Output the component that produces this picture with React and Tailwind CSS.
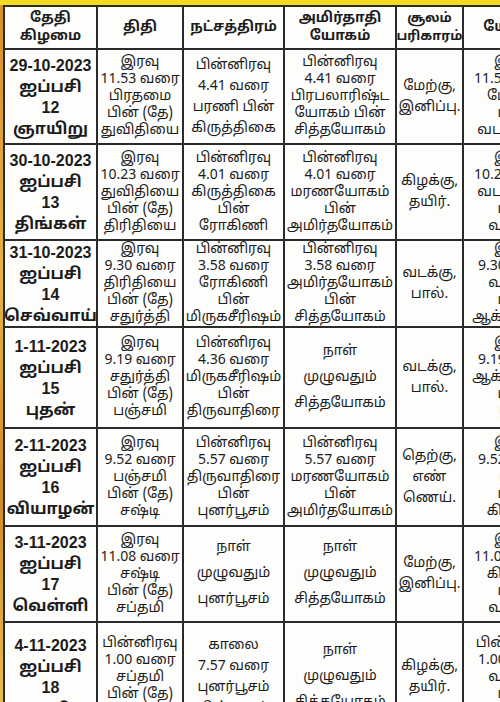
import React from "react";

const rows = [
  {
    h: 95,
    date: ["29-10-2023", "ஐப்பசி", "12", "ஞாயிறு"],
    tithi: ["இரவு", "11.53 வரை", "பிரதமை", "பின் (தே)", "துவிதியை"],
    nak: ["பின்னிரவு", "4.41 வரை", "பரணி பின்", "கிருத்திகை"],
    amr: ["பின்னிரவு", "4.41 வரை", "பிரபலாரிஷ்ட", "யோகம் பின்", "சித்தயோகம்"],
    sool: ["மேற்கு,", "இனிப்பு."],
    last: ["இரவு", "11.53 வரை", "மேஷம்", "பின்", "வடமேற்கு"],
  },
  {
    h: 96,
    date: ["30-10-2023", "ஐப்பசி", "13", "திங்கள்"],
    tithi: ["இரவு", "10.23 வரை", "துவிதியை", "பின் (தே)", "திரிதியை"],
    nak: ["பின்னிரவு", "4.01 வரை", "கிருத்திகை", "பின்", "ரோகிணி"],
    amr: ["பின்னிரவு", "4.01 வரை", "மரணயோகம்", "பின்", "அமிர்தயோகம்"],
    sool: ["கிழக்கு,", "தயிர்."],
    last: ["இரவு", "10.23 வரை", "வடமேற்கு", "பின்", "வடக்கு"],
  },
  {
    h: 85,
    date: ["31-10-2023", "ஐப்பசி", "14", "செவ்வாய்"],
    tithi: ["இரவு", "9.30 வரை", "திரிதியை", "பின் (தே)", "சதுர்த்தி"],
    nak: ["பின்னிரவு", "3.58 வரை", "ரோகிணி", "பின்", "மிருகசீரிஷம்"],
    amr: ["பின்னிரவு", "3.58 வரை", "அமிர்தயோகம்", "பின்", "சித்தயோகம்"],
    sool: ["வடக்கு,", "பால்."],
    last: ["இரவு", "9.30 வரை", "வடக்கு", "பின்", "ஆக்னேயம்"],
  },
  {
    h: 101,
    date: ["1-11-2023", "ஐப்பசி", "15", "புதன்"],
    tithi: ["இரவு", "9.19 வரை", "சதுர்த்தி", "பின் (தே)", "பஞ்சமி"],
    nak: ["பின்னிரவு", "4.36 வரை", "மிருகசீரிஷம்", "பின்", "திருவாதிரை"],
    amr: ["நாள்", "முழுவதும்", "சித்தயோகம்"],
    sool: ["வடக்கு,", "பால்."],
    last: ["இரவு", "9.19 வரை", "ஆக்னேயம்", "பின்", "பூமி"],
  },
  {
    h: 98,
    date: ["2-11-2023", "ஐப்பசி", "16", "வியாழன்"],
    tithi: ["இரவு", "9.52 வரை", "பஞ்சமி", "பின் (தே)", "சஷ்டி"],
    nak: ["பின்னிரவு", "5.57 வரை", "திருவாதிரை", "பின்", "புனர்பூசம்"],
    amr: ["பின்னிரவு", "5.57 வரை", "மரணயோகம்", "பின்", "அமிர்தயோகம்"],
    sool: ["தெற்கு,", "எண்", "ணெய்."],
    last: ["இரவு", "9.52 வரை", "பூமி", "பின்", "கிழக்கு"],
  },
  {
    h: 96,
    date: ["3-11-2023", "ஐப்பசி", "17", "வெள்ளி"],
    tithi: ["இரவு", "11.08 வரை", "சஷ்டி", "பின் (தே)", "சப்தமி"],
    nak: ["நாள்", "முழுவதும்", "புனர்பூசம்"],
    amr: ["நாள்", "முழுவதும்", "சித்தயோகம்"],
    sool: ["மேற்கு,", "இனிப்பு."],
    last: ["இரவு", "11.08 வரை", "கிழக்கு", "பின்", "வடக்கு"],
  },
  {
    h: 110,
    date: ["4-11-2023", "ஐப்பசி", "18", "சனி"],
    tithi: ["பின்னிரவு", "1.00 வரை", "சப்தமி", "பின் (தே)", "அஷ்டமி"],
    nak: ["காலை", "7.57 வரை", "புனர்பூசம்", "பின் பூசம்"],
    amr: ["நாள்", "முழுவதும்", "சித்தயோகம்"],
    sool: ["கிழக்கு,", "தயிர்."],
    last: ["பின்னிரவு", "1.00 வரை", "வடக்கு", "பின்", "தெற்கு"],
  },
];

const lhFor = (n) => (n >= 5 ? 17 : n === 4 ? 21 : 26);

function Lines({ lines, lh, bold, size }) {
  return (
    <div
      className={`flex flex-col items-center justify-center text-center whitespace-nowrap ${bold ? "font-bold" : ""}`}
      style={{ lineHeight: `${lh}px`, fontSize: `${size}px` }}
    >
      {lines.map((l, i) => (
        <div key={i}>{l}</div>
      ))}
    </div>
  );
}

const cell = "border-2 border-[#2b2b2b] bg-[#fdfdfb] align-middle p-0 overflow-hidden";

export default function App() {
  return (
    <div
      className="w-[500px] h-[702px] overflow-hidden pt-[5px] pl-[3px] bg-[linear-gradient(to_bottom,#f1dc22_0px,#f1dc22_5px,#d8902a_5px,#e6b444_40%,#d08a28_70%,#e8bc50_100%)] text-[#1c1c1c]"
      style={{ fontFamily: '"Noto Sans Tamil", "Latha", "Noto Sans", "Liberation Sans", sans-serif' }}
    >
      <table className="table-fixed border-collapse w-[560px]">
        <colgroup>
          <col className="w-[93px]" />
          <col className="w-[86px]" />
          <col className="w-[101px]" />
          <col className="w-[112px]" />
          <col className="w-[67px]" />
          <col className="w-[101px]" />
        </colgroup>
        <thead>
          <tr style={{ height: 43 }}>
            <th className={cell}>
              <Lines lines={["தேதி", "கிழமை"]} lh={18} bold size={14} />
            </th>
            <th className={cell}>
              <Lines lines={["திதி"]} lh={18} bold size={14} />
            </th>
            <th className={cell}>
              <Lines lines={["நட்சத்திரம்"]} lh={18} bold size={14} />
            </th>
            <th className={cell}>
              <Lines lines={["அமிர்தாதி", "யோகம்"]} lh={18} bold size={14} />
            </th>
            <th className={cell}>
              <Lines lines={["சூலம்", "பரிகாரம்"]} lh={18} bold size={13} />
            </th>
            <th className={cell}>
              <Lines lines={["யோகம்"]} lh={18} bold size={14} />
            </th>
          </tr>
        </thead>
        <tbody>
          {rows.map((r, i) => (
            <tr key={i} style={{ height: r.h }}>
              <td className={cell}>
                <div style={{ fontFamily: '"Liberation Sans", "Noto Sans Tamil", sans-serif' }}>
                  <Lines lines={r.date} lh={21} bold size={16} />
                </div>
              </td>
              <td className={cell}>
                <Lines lines={r.tithi} lh={lhFor(r.tithi.length)} size={14} />
              </td>
              <td className={cell}>
                <Lines lines={r.nak} lh={lhFor(r.nak.length)} size={14} />
              </td>
              <td className={cell}>
                <Lines lines={r.amr} lh={lhFor(r.amr.length)} size={14} />
              </td>
              <td className={cell}>
                <Lines lines={r.sool} lh={21} size={14} />
              </td>
              <td className={cell}>
                <Lines lines={r.last} lh={17} size={14} />
              </td>
            </tr>
          ))}
        </tbody>
      </table>
    </div>
  );
}
